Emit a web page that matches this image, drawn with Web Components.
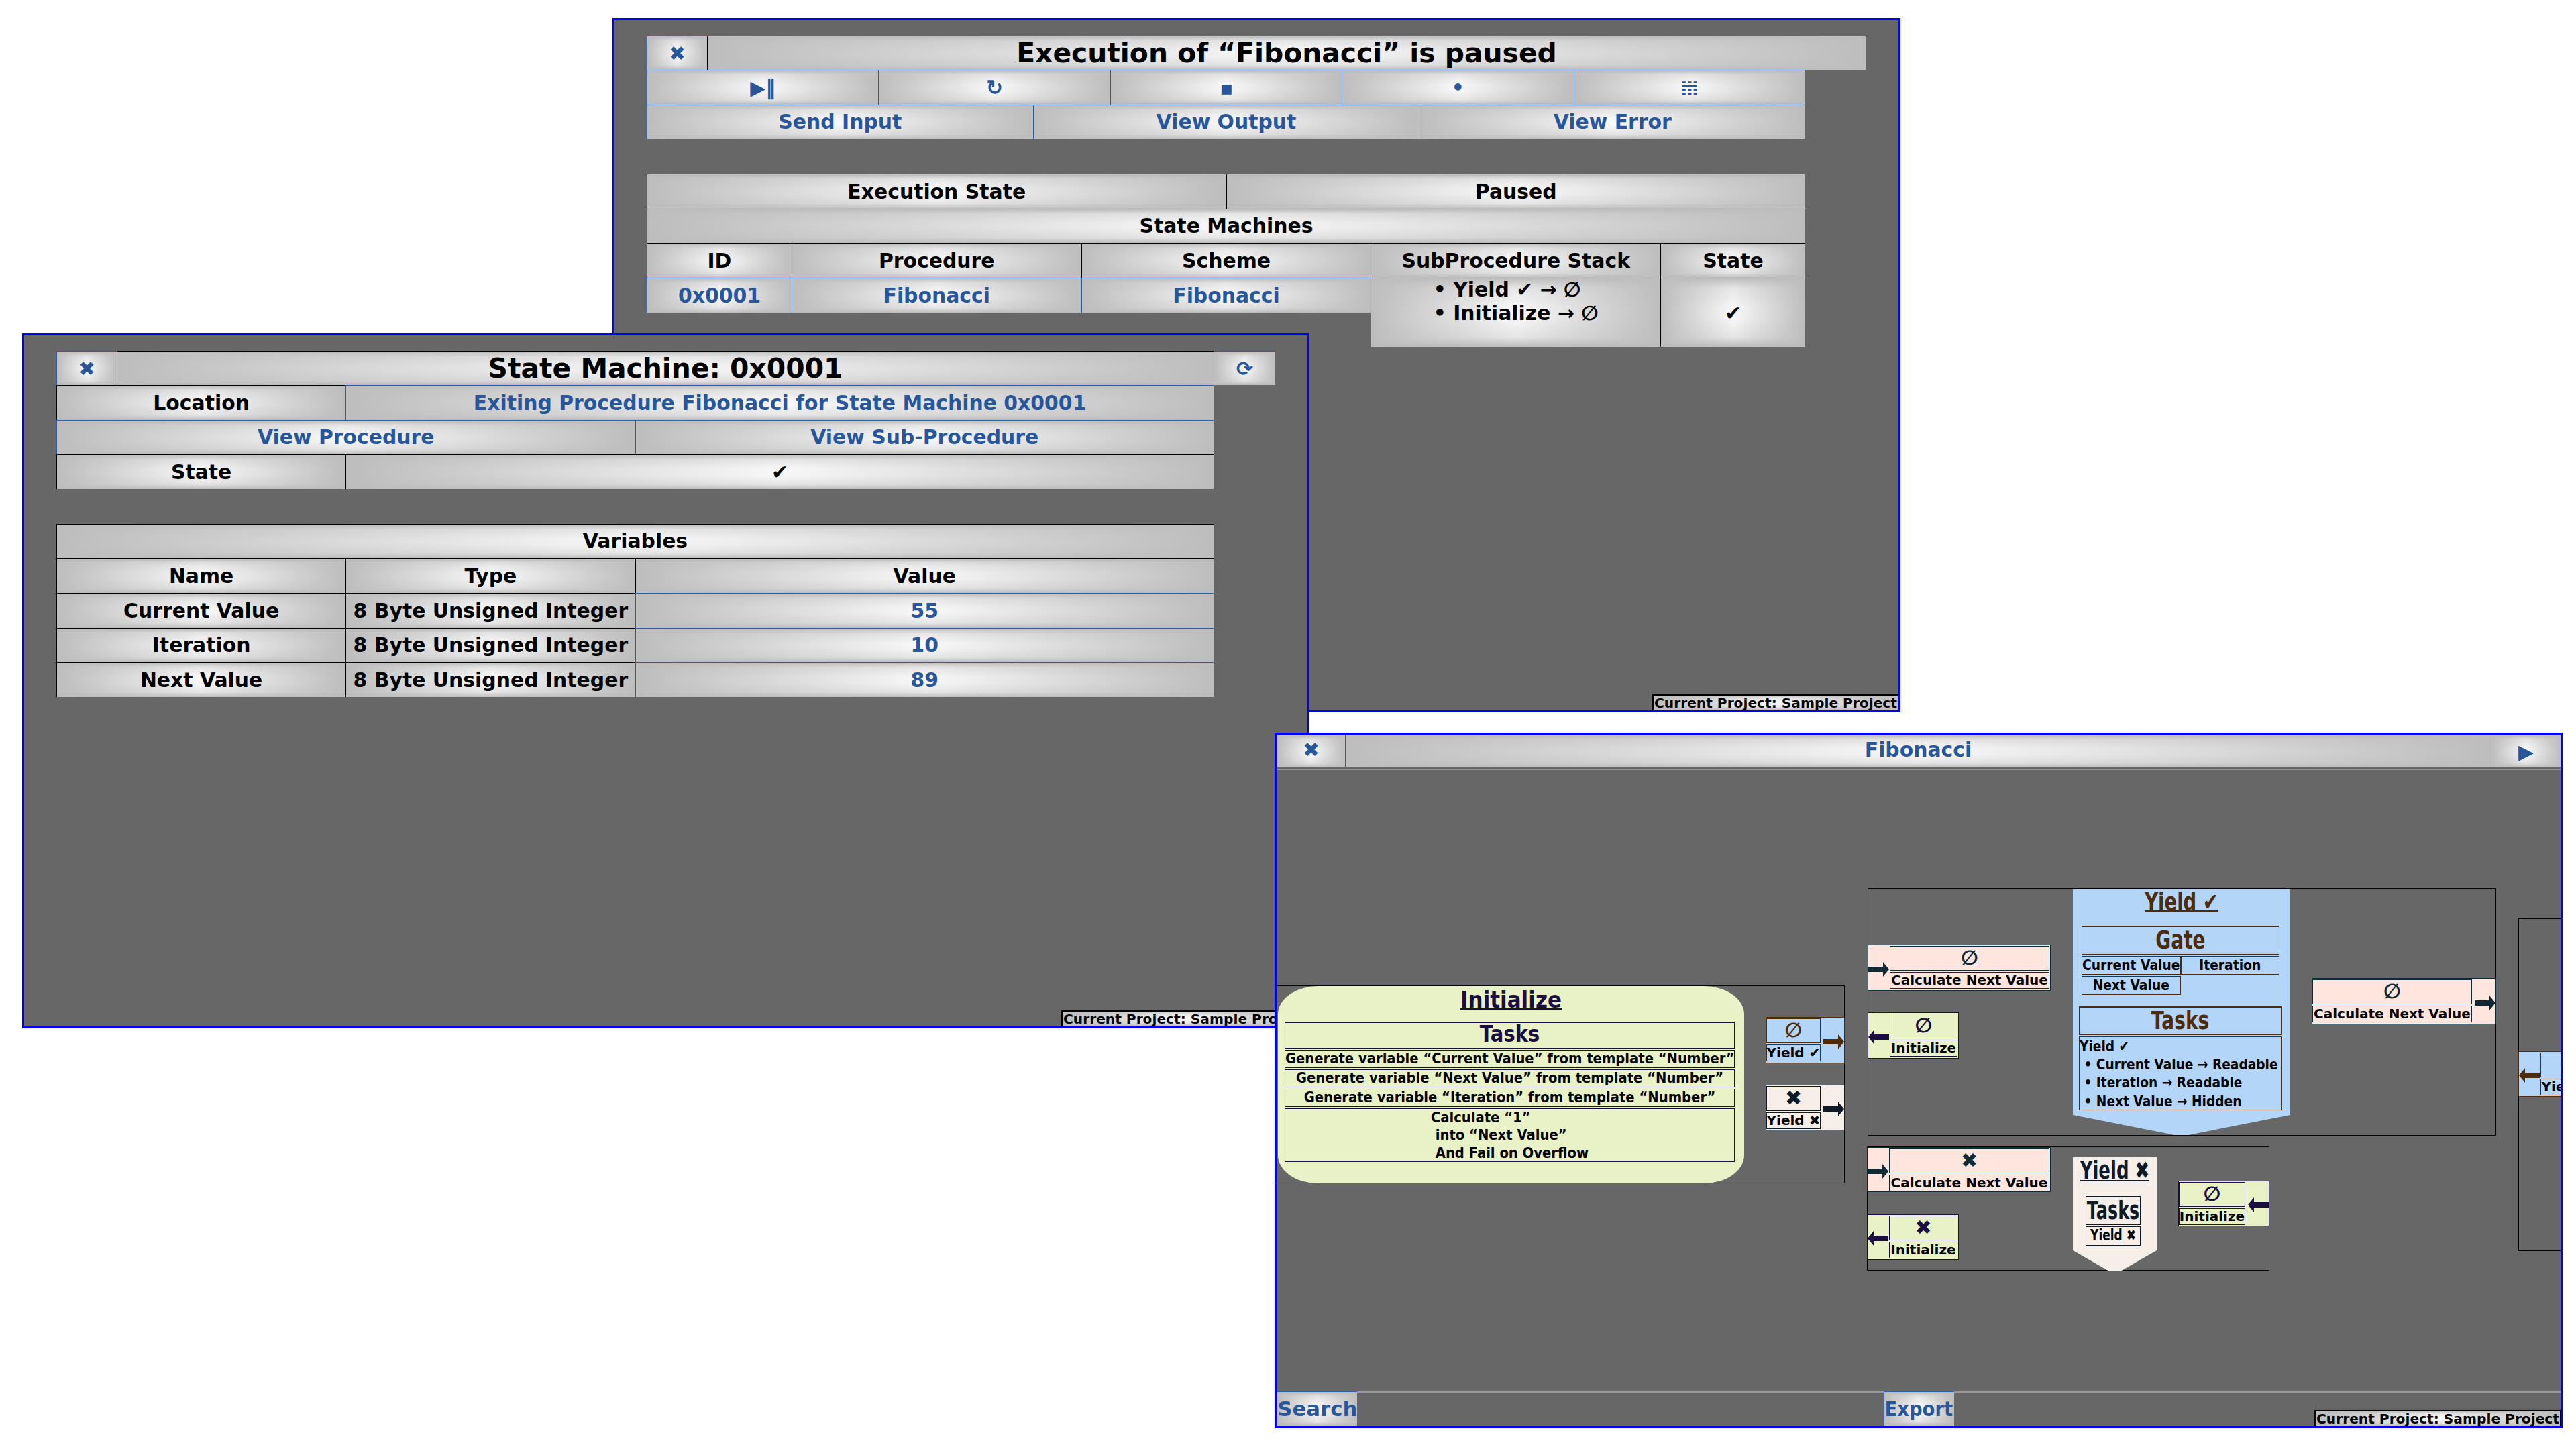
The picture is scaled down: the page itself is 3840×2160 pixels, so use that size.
<!DOCTYPE html>
<html lang="en"><head><meta charset="utf-8"><title>Fibonacci</title>
<style>
html,body{margin:0;padding:0;background:#fff;width:3840px;height:2160px;overflow:hidden;font:bold 30px "DejaVu Sans",sans-serif}
</style></head><body>

<ui-window box="913 27 2833 1062">
  <ui-titlebar>
    <ui-cell kind="link">✖</ui-cell>
    <ui-cell size="title">Execution of “Fibonacci” is paused</ui-cell>
  </ui-titlebar>
  <ui-grid cols="5">
    <ui-cell kind="link">▶‖</ui-cell><ui-cell kind="link">↻</ui-cell><ui-cell kind="link">▪</ui-cell><ui-cell kind="link">•</ui-cell><ui-cell kind="link">𝍄</ui-cell>
  </ui-grid>
  <ui-grid cols="3">
    <ui-cell kind="link">Send Input</ui-cell><ui-cell kind="link">View Output</ui-cell><ui-cell kind="link">View Error</ui-cell>
  </ui-grid>
  <ui-grid cols="8" spaced>
    <ui-cell span="4">Execution State</ui-cell><ui-cell span="4">Paused</ui-cell>
    <ui-cell span="8">State Machines</ui-cell>
    <ui-cell>ID</ui-cell><ui-cell span="2">Procedure</ui-cell><ui-cell span="2">Scheme</ui-cell><ui-cell span="2">SubProcedure Stack</ui-cell><ui-cell>State</ui-cell>
    <ui-cell kind="link">0x0001</ui-cell><ui-cell kind="link" span="2">Fibonacci</ui-cell><ui-cell kind="link" span="2">Fibonacci</ui-cell>
    <ui-cell span="2" rows="2"><ui-stack><div>• Yield ✔ → ∅</div><div>• Initialize → ∅</div></ui-stack></ui-cell>
    <ui-cell rows="2">✔</ui-cell>
  </ui-grid>
  <ui-cell slot="status" small>Current Project: Sample Project</ui-cell>
</ui-window>

<ui-window box="33 497 1952 1533">
  <ui-titlebar wide>
    <ui-cell kind="link">✖</ui-cell>
    <ui-cell size="title">State Machine: 0x0001</ui-cell>
    <ui-cell kind="link">⟳</ui-cell>
  </ui-titlebar>
  <ui-grid cols="8" narrow>
    <ui-cell span="2">Location</ui-cell><ui-cell kind="link" span="6">Exiting Procedure Fibonacci for State Machine 0x0001</ui-cell>
    <ui-cell kind="link" span="4">View Procedure</ui-cell><ui-cell kind="link" span="4">View Sub-Procedure</ui-cell>
    <ui-cell span="2">State</ui-cell><ui-cell span="6">✔</ui-cell>
  </ui-grid>
  <ui-grid cols="8" spaced narrow>
    <ui-cell span="8">Variables</ui-cell>
    <ui-cell span="2">Name</ui-cell><ui-cell span="2">Type</ui-cell><ui-cell span="4">Value</ui-cell>
    <ui-cell span="2">Current Value</ui-cell><ui-cell span="2">8 Byte Unsigned Integer</ui-cell><ui-cell kind="link" span="4">55</ui-cell>
    <ui-cell span="2">Iteration</ui-cell><ui-cell span="2">8 Byte Unsigned Integer</ui-cell><ui-cell kind="link" span="4">10</ui-cell>
    <ui-cell span="2">Next Value</ui-cell><ui-cell span="2">8 Byte Unsigned Integer</ui-cell><ui-cell kind="link" span="4">89</ui-cell>
  </ui-grid>
  <ui-cell slot="status" small>Current Project: Sample Project</ui-cell>
</ui-window>

<ui-window box="1900 1092 3820 2129" flush>
  <ui-diagram>
    <ui-cell slot="close" kind="link" lift>✖</ui-cell>
    <ui-cell slot="name" kind="link" lift>Fibonacci</ui-cell>
    <ui-cell slot="next" kind="link">▶</ui-cell>

    <flow-group box="1893 1468 2750 1763"></flow-group>
    <flow-node box="1905 1469 2600 1763" tone="init" rounded>
      <flow-title style="--fs:31px;--lh:29px;--sy:1.1;--ty:2px;height:36px">Initialize</flow-title>
      <flow-stack style="margin:17px 14px 0 10px">
        <flow-box big style="height:40px;line-height:35px;--fs:29px;--sy:1.15">Tasks</flow-box>
        <flow-box row>Generate variable “Current Value” from template “Number”</flow-box>
        <flow-box row>Generate variable “Next Value” from template “Number”</flow-box>
        <flow-box row>Generate variable “Iteration” from template “Number”</flow-box>
        <flow-box calc><span class="calc"><div>Calculate “1”</div><div>&nbsp;into “Next Value”</div><div>&nbsp;And Fail on Overflow</div></span></flow-box>
      </flow-stack>
    </flow-node>
    <flow-port box="2632 1515 2750 1584" tone="blue" side="right" point="right"><span slot="value">∅</span>Yield ✔</flow-port>
    <flow-port box="2632 1616 2750 1684" tone="cream" side="right" point="right"><span slot="value">✖</span>Yield ✖</flow-port>

    <flow-group box="2784 1323 3721 1692"></flow-group>
    <flow-port box="2784 1407 3057 1476" tone="pink" side="left" point="right"><span slot="value">∅</span>Calculate Next Value</flow-port>
    <flow-port box="2784 1508 2920 1577" tone="init" side="left" point="left"><span slot="value">∅</span>Initialize</flow-port>
    <flow-node box="3090 1324 3414 1691" tone="blue" shield="337">
      <flow-title style="height:36px">Yield ✔</flow-title>
      <flow-stack style="margin:19px 16px 0 13px">
        <flow-box big>Gate</flow-box>
        <flow-pairs>
          <flow-box cell>Current Value</flow-box><flow-box cell>Iteration</flow-box>
          <flow-box cell>Next Value</flow-box>
        </flow-pairs>
      </flow-stack>
      <flow-stack style="margin:17px 13px 0 9px">
        <flow-box big>Tasks</flow-box>
        <flow-box list><div>Yield ✔</div><div>&nbsp;• Current Value → Readable</div><div>&nbsp;• Iteration → Readable</div><div>&nbsp;• Next Value → Hidden</div></flow-box>
      </flow-stack>
    </flow-node>
    <flow-port box="3446 1457 3721 1526" tone="pink" side="right" point="right"><span slot="value">∅</span>Calculate Next Value</flow-port>

    <flow-group box="3754 1368 3950 1864"></flow-group>
    <flow-port box="3754 1566 3872 1634" tone="blue" side="left" point="left"><span slot="value">∅</span>Yield ✔</flow-port>

    <flow-group box="2783 1708 3383 1893"></flow-group>
    <flow-port box="2783 1709 3057 1776" tone="pink" side="left" point="right"><span slot="value">✖</span>Calculate Next Value</flow-port>
    <flow-port box="2783 1809 2920 1877" tone="init" side="left" point="left"><span slot="value">✖</span>Initialize</flow-port>
    <flow-node box="3090 1724 3215 1893" tone="cream" shield="139">
      <flow-title style="--fs:26px;--lh:34px;--sy:1.4;--ty:2px;height:36px">Yield ✖</flow-title>
      <flow-stack style="margin:22px 24px 0 19px">
        <flow-box big style="--fs:25.5px;--sy:1.45;line-height:38px">Tasks</flow-box>
        <flow-box row style="--fs:17px;--sy:1.35;height:29px">Yield ✖</flow-box>
      </flow-stack>
    </flow-node>
    <flow-port box="3247 1759 3383 1827" tone="init" side="right" point="left"><span slot="value">∅</span>Initialize</flow-port>

    <ui-cell slot="search" kind="link" style="width:120px"><span style="display:inline-block;transform:scaleX(1.03)">Search</span></ui-cell>
    <ui-cell slot="export" kind="link" style="width:105px"><span style="display:inline-block;transform:scaleX(.92)">Export</span></ui-cell>
  </ui-diagram>
  <ui-cell slot="status" small>Current Project: Sample Project</ui-cell>
</ui-window>

<script>
const ORIGIN=[1903,1146];
function boxOf(el){return el.getAttribute('box').trim().split(/\s+/).map(Number)}
class Base extends HTMLElement{
  constructor(){super();const r=this.attachShadow({mode:'open'});r.innerHTML='<style>'+this.constructor.css+'</style>'+this.constructor.html}
}
function def(name,css,html,extra){
  const C=class extends Base{};C.css=css;C.html=html||'<slot></slot>';
  if(extra)C.prototype.connectedCallback=extra;
  customElements.define(name,C);
}
const SHADE='linear-gradient(to bottom,#bdbdbd 0,rgba(189,189,189,.3) 14%,rgba(189,189,189,0) 42%,rgba(189,189,189,0) 58%,rgba(189,189,189,.3) 86%,#bdbdbd 100%),linear-gradient(to right,#bdbdbd 0,#f8f8f8 50%,#bdbdbd 100%)';
function place(){
  const [a,b,c,d]=boxOf(this);
  this.style.left=(a-ORIGIN[0])+'px';this.style.top=(b-ORIGIN[1])+'px';
  this.style.width=(c-a)+'px';this.style.height=(d-b)+'px';
  const s=this.getAttribute('shield');
  if(s){const w=c-a;this.style.clipPath=`polygon(0 0,100% 0,100% ${s}px,${w/2+10}px 100%,${w/2-10}px 100%,0 ${s}px)`}
}

def('ui-window',`
:host{position:absolute;display:block;box-sizing:border-box;background:#676767;border:3px solid #00f;overflow:hidden}
.body{padding:23px 0 0 48px;height:100%;box-sizing:border-box}
:host([flush]) .body{padding:0}
.status{position:absolute;right:0;bottom:0;display:flex}
`,`<div class="body"><slot></slot></div><div class="status"><slot name="status"></slot></div>`,function(){
  const [a,b,c,d]=boxOf(this);
  this.style.left=a+'px';this.style.top=b+'px';this.style.width=(c-a)+'px';this.style.height=(d-b)+'px';
});

def('ui-cell',`
:host{display:flex;align-items:center;justify-content:center;box-sizing:border-box;min-width:0;white-space:nowrap;text-align:center;
 border-top:1px solid #000;border-left:1px solid #000;color:#000;font-size:29.85px;font-weight:bold;background:${SHADE}}
:host([kind=link]){color:#27569b;border-color:#2a5ca8}
:host([size=title]){font-size:40.85px}
:host([lift]){padding-bottom:5px}
:host([small]){font-size:20.2px;width:367px;height:24px;border:2px solid #000;border-right-width:1px;border-bottom-width:1px;line-height:20px}
`,'<slot></slot>',function(){
  const s=this.getAttribute('span'),r=this.getAttribute('rows');
  if(s)this.style.gridColumn='span '+s;
  if(r)this.style.gridRow='span '+r;
});

def('ui-grid',`
:host{display:grid;width:1727px;grid-auto-rows:51.67px}
:host([narrow]){width:1725px}
:host([spaced]){margin-top:51.67px}
`,'<slot></slot>',function(){
  this.style.gridTemplateColumns='repeat('+this.getAttribute('cols')+',minmax(0,1fr))';
});

def('ui-titlebar',`
:host{display:grid;width:1817px;height:51px;grid-template-columns:90px 1fr}
:host([wide]){grid-template-columns:90px 1fr 92px}
`);

def('ui-stack',`
:host{display:block;text-align:left;line-height:35.5px;height:105px}
`);

def('ui-diagram',`
:host{display:grid;height:100%;grid-template-rows:51px 1px 1fr 52px}
.head{display:grid;grid-template-columns:102px 1fr 104px}
.rule{background:#999;height:2px}
.canvas{position:relative;overflow:hidden;min-height:0}
.foot{display:grid;grid-template-columns:1fr auto 1fr;border-top:2px solid #999;box-sizing:border-box}
.foot>div{display:flex}
::slotted(ui-cell[slot=close]),::slotted(ui-cell[slot=name]),::slotted(ui-cell[slot=next]){height:49px}
::slotted(ui-cell[slot=search]),::slotted(ui-cell[slot=export]){margin-top:-2px}
`,`<div class="head"><slot name="close"></slot><slot name="name"></slot><slot name="next"></slot></div>
<div class="rule"></div>
<div class="canvas"><slot></slot></div>
<div class="foot"><div><slot name="search"></slot></div><div><slot name="export"></slot></div><div></div></div>`);

def('flow-group',`:host{position:absolute;display:block;box-sizing:border-box;border:1px solid #000}`,'',place);

const TONES=`
:host([tone=blue]){--bg:#b3d5f7;--tone:#4d2b0d}
:host([tone=init]){--bg:#e8f2c6;--tone:#1a0f40}
:host([tone=pink]){--bg:#fee6de;--tone:#0e2a35}
:host([tone=cream]){--bg:#f6efe9;--tone:#0e1a28}
`;
def('flow-node',TONES+`
:host{position:absolute;display:flex;flex-direction:column;box-sizing:border-box;background:var(--bg);color:#000;font-size:20px;overflow:hidden}
:host([rounded]){border-radius:60px/42px}
`,'<slot></slot>',place);

def('flow-title',`
:host{display:block;text-align:center;color:var(--tone);font-size:var(--fs,27.5px);white-space:nowrap}
.u{display:inline-block;border-bottom:2px solid var(--tone);line-height:var(--lh,32px)}
.t{display:inline-block;transform:translateY(var(--ty,3px)) scaleY(var(--sy,1.33))}
`,'<span class="u"><span class="t"><slot></slot></span></span>');

def('flow-stack',`:host{display:flex;flex-direction:column;gap:2px}`);

def('flow-box',`
:host{display:block;box-sizing:border-box;border:1px solid var(--tone);color:#000;font-size:var(--fs,18.7px);text-align:center;white-space:nowrap;line-height:25px}
.t{display:inline-block;transform:scaleY(var(--sy,1.17))}
:host([big]){color:var(--tone);font-size:var(--fs,28px);line-height:40px;height:43px;border-top-width:2px}
:host([big]) .t{transform:scaleY(var(--sy,1.33))}
:host([row]){height:27px;font-size:var(--fs,19.6px);line-height:24px}
:host([row]) .t{transform:scaleY(var(--sy,1.1))}
:host([cell]){height:28px;line-height:25px}
:host([calc]){height:80px;font-size:19.6px;line-height:23.9px;border-bottom-width:2px}
:host([calc]) .t{transform-origin:50% 0;transform:scaleY(1.1);text-align:left}
:host([list]){text-align:left;height:110px;line-height:23.2px;font-size:18.6px}
:host([list]) .t{display:block;transform-origin:0 0;transform:scaleY(1.17)}
`,'<span class="t"><slot></slot></span>');

def('flow-pairs',`:host{display:grid;grid-template-columns:1fr 1fr;row-gap:2px}`);

function arrowSVG(dir){
  const pts=dir==='right'?'0,7 22,7 22,0 31,11 22,22 22,15 0,15':'31,7 9,7 9,0 0,11 9,22 9,15 31,15';
  return `<svg width="31" height="22" viewBox="0 0 31 22"><polygon points="${pts}" fill="currentColor"/></svg>`;
}
def('flow-port',TONES+`
:host{position:absolute;display:flex;box-sizing:border-box;background:var(--bg);border:1px solid var(--tone);overflow:hidden;font-size:20px}
.col{flex:1;min-width:0;display:flex;flex-direction:column;gap:2px;padding:1px 1px 0 0}
.val{height:37px;box-sizing:border-box;padding-bottom:2px;border:1px solid var(--tone);color:var(--tone);font-size:30px;display:flex;align-items:center;justify-content:center;line-height:1}
.lab{height:25px;box-sizing:border-box;padding-bottom:2px;border:1px solid var(--tone);color:#000;display:flex;align-items:center;justify-content:center;white-space:nowrap;line-height:1}
.arr{width:32px;flex:none;display:flex;align-items:center;justify-content:flex-start;color:var(--tone);padding-top:4px;box-sizing:border-box}
:host([side=right]){flex-direction:row-reverse}
:host([side=right]) .col{padding-right:0}
:host([side=right]) .arr{width:35px;justify-content:flex-end}
`,`<div class="arr"></div><div class="col"><div class="val"><slot name="value"></slot></div><div class="lab"><slot></slot></div></div>`,function(){
  place.call(this);
  this.shadowRoot.querySelector('.arr').innerHTML=arrowSVG(this.getAttribute('point'));
});
</script>
</body></html>
